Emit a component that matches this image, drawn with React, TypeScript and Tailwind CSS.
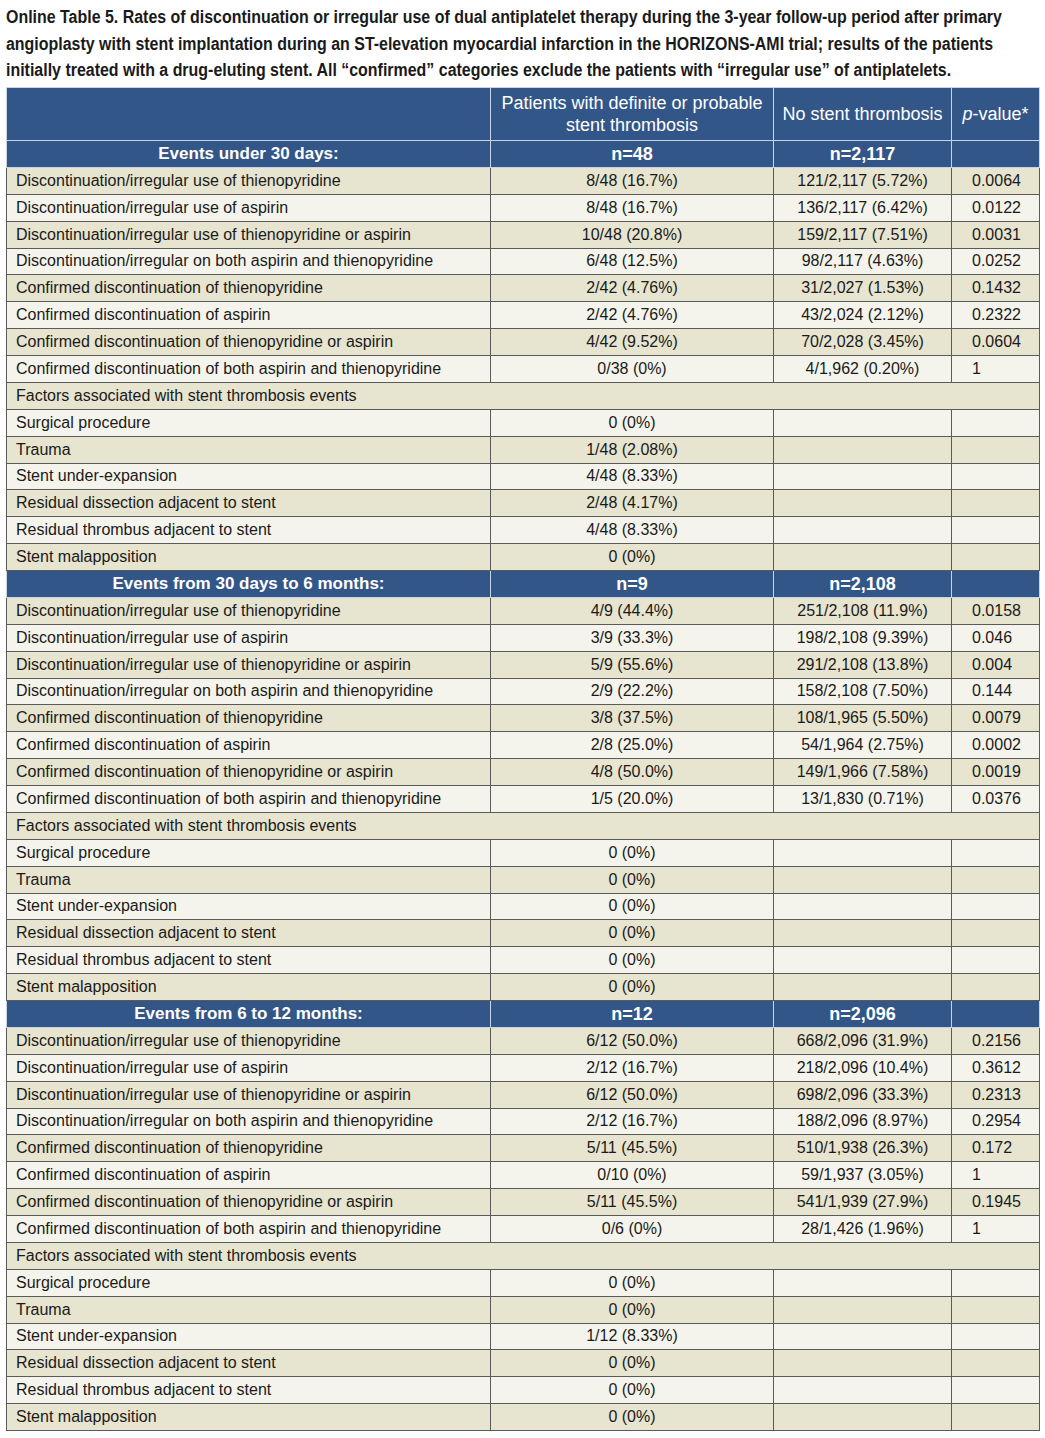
import React, { useLayoutEffect, useRef, useState } from 'react';

type Row = [string, string, string, string];

interface Group {
  title: string;
  nDefinite: string;
  nNone: string;
  rows: Row[];
  factors: [string, string][];
}

const groups: Group[] = [
  {
    title: 'Events under 30 days:',
    nDefinite: 'n=48',
    nNone: 'n=2,117',
    rows: [
      ['Discontinuation/irregular use of thienopyridine', '8/48 (16.7%)', '121/2,117 (5.72%)', '0.0064'],
      ['Discontinuation/irregular use of aspirin', '8/48 (16.7%)', '136/2,117 (6.42%)', '0.0122'],
      ['Discontinuation/irregular use of thienopyridine or aspirin', '10/48 (20.8%)', '159/2,117 (7.51%)', '0.0031'],
      ['Discontinuation/irregular on both aspirin and thienopyridine', '6/48 (12.5%)', '98/2,117 (4.63%)', '0.0252'],
      ['Confirmed discontinuation of thienopyridine', '2/42 (4.76%)', '31/2,027 (1.53%)', '0.1432'],
      ['Confirmed discontinuation of aspirin', '2/42 (4.76%)', '43/2,024 (2.12%)', '0.2322'],
      ['Confirmed discontinuation of thienopyridine or aspirin', '4/42 (9.52%)', '70/2,028 (3.45%)', '0.0604'],
      ['Confirmed discontinuation of both aspirin and thienopyridine', '0/38 (0%)', '4/1,962 (0.20%)', '1'],
    ],
    factors: [
      ['Surgical procedure', '0 (0%)'],
      ['Trauma', '1/48 (2.08%)'],
      ['Stent under-expansion', '4/48 (8.33%)'],
      ['Residual dissection adjacent to stent', '2/48 (4.17%)'],
      ['Residual thrombus adjacent to stent', '4/48 (8.33%)'],
      ['Stent malapposition', '0 (0%)'],
    ],
  },
  {
    title: 'Events from 30 days to 6 months:',
    nDefinite: 'n=9',
    nNone: 'n=2,108',
    rows: [
      ['Discontinuation/irregular use of thienopyridine', '4/9 (44.4%)', '251/2,108 (11.9%)', '0.0158'],
      ['Discontinuation/irregular use of aspirin', '3/9 (33.3%)', '198/2,108 (9.39%)', '0.046'],
      ['Discontinuation/irregular use of thienopyridine or aspirin', '5/9 (55.6%)', '291/2,108 (13.8%)', '0.004'],
      ['Discontinuation/irregular on both aspirin and thienopyridine', '2/9 (22.2%)', '158/2,108 (7.50%)', '0.144'],
      ['Confirmed discontinuation of thienopyridine', '3/8 (37.5%)', '108/1,965 (5.50%)', '0.0079'],
      ['Confirmed discontinuation of aspirin', '2/8 (25.0%)', '54/1,964 (2.75%)', '0.0002'],
      ['Confirmed discontinuation of thienopyridine or aspirin', '4/8 (50.0%)', '149/1,966 (7.58%)', '0.0019'],
      ['Confirmed discontinuation of both aspirin and thienopyridine', '1/5 (20.0%)', '13/1,830 (0.71%)', '0.0376'],
    ],
    factors: [
      ['Surgical procedure', '0 (0%)'],
      ['Trauma', '0 (0%)'],
      ['Stent under-expansion', '0 (0%)'],
      ['Residual dissection adjacent to stent', '0 (0%)'],
      ['Residual thrombus adjacent to stent', '0 (0%)'],
      ['Stent malapposition', '0 (0%)'],
    ],
  },
  {
    title: 'Events from 6 to 12 months:',
    nDefinite: 'n=12',
    nNone: 'n=2,096',
    rows: [
      ['Discontinuation/irregular use of thienopyridine', '6/12 (50.0%)', '668/2,096 (31.9%)', '0.2156'],
      ['Discontinuation/irregular use of aspirin', '2/12 (16.7%)', '218/2,096 (10.4%)', '0.3612'],
      ['Discontinuation/irregular use of thienopyridine or aspirin', '6/12 (50.0%)', '698/2,096 (33.3%)', '0.2313'],
      ['Discontinuation/irregular on both aspirin and thienopyridine', '2/12 (16.7%)', '188/2,096 (8.97%)', '0.2954'],
      ['Confirmed discontinuation of thienopyridine', '5/11 (45.5%)', '510/1,938 (26.3%)', '0.172'],
      ['Confirmed discontinuation of aspirin', '0/10 (0%)', '59/1,937 (3.05%)', '1'],
      ['Confirmed discontinuation of thienopyridine or aspirin', '5/11 (45.5%)', '541/1,939 (27.9%)', '0.1945'],
      ['Confirmed discontinuation of both aspirin and thienopyridine', '0/6 (0%)', '28/1,426 (1.96%)', '1'],
    ],
    factors: [
      ['Surgical procedure', '0 (0%)'],
      ['Trauma', '0 (0%)'],
      ['Stent under-expansion', '1/12 (8.33%)'],
      ['Residual dissection adjacent to stent', '0 (0%)'],
      ['Residual thrombus adjacent to stent', '0 (0%)'],
      ['Stent malapposition', '0 (0%)'],
    ],
  },
];

const titleLines = [
  'Online Table 5. Rates of discontinuation or irregular use of dual antiplatelet therapy during the 3-year follow-up period after primary',
  'angioplasty with stent implantation during an ST-elevation myocardial infarction in the HORIZONS-AMI trial; results of the patients',
  'initially treated with a drug-eluting stent. All “confirmed” categories exclude the patients with “irregular use” of antiplatelets.',
];

const cell = 'border border-[#5a5a5a] h-[26.875px] p-0 leading-none';
const blueCell = 'border border-[#c9d5e6] h-[26.875px] p-0 leading-none text-white text-center';

function rowBg(i: number) {
  return i % 2 === 0 ? 'bg-[#e7e4cf]' : 'bg-[#f5f4ec]';
}

// the caption is a condensed face; squeeze Liberation Sans Bold so line 1 fills 996px
function Caption() {
  const firstRef = useRef<HTMLSpanElement>(null);
  const [scale, setScale] = useState(0.8);
  useLayoutEffect(() => {
    const w = firstRef.current?.scrollWidth ?? 0;
    if (w > 0) setScale(996 / w);
  }, []);
  return (
    <div className="pl-[6px] pt-[4px] h-[87px] overflow-hidden text-[18px] leading-[26.5px] font-bold text-[#1a1a1a]">
      {titleLines.map((line, i) => (
        <div key={i} className="whitespace-nowrap w-[1030px] overflow-hidden">
          <span
            ref={i === 0 ? firstRef : undefined}
            className="inline-block origin-left"
            style={{ transform: `scaleX(${scale})` }}
          >
            {line}
          </span>
        </div>
      ))}
    </div>
  );
}

function GroupRows({ group }: { group: Group }) {
  return (
    <>
      <tr className="bg-[#335689]">
        <td className={`${blueCell} text-[17px] font-bold`}>{group.title}</td>
        <td className={`${blueCell} text-[18px] font-bold`}>{group.nDefinite}</td>
        <td className={`${blueCell} text-[18px] font-bold`}>{group.nNone}</td>
        <td className={blueCell} />
      </tr>
      {group.rows.map((r, i) => (
        <tr key={r[0]} className={rowBg(i)}>
          <td className={`${cell} pl-[9px]`}>{r[0]}</td>
          <td className={`${cell} text-center`}>{r[1]}</td>
          <td className={`${cell} text-center`}>{r[2]}</td>
          <td className={`${cell} pl-[20px]`}>{r[3]}</td>
        </tr>
      ))}
      <tr className={rowBg(8)}>
        <td colSpan={4} className={`${cell} pl-[9px]`}>
          Factors associated with stent thrombosis events
        </td>
      </tr>
      {group.factors.map((f, i) => (
        <tr key={f[0]} className={rowBg(i + 9)}>
          <td className={`${cell} pl-[9px]`}>{f[0]}</td>
          <td className={`${cell} text-center`}>{f[1]}</td>
          <td className={cell} />
          <td className={cell} />
        </tr>
      ))}
    </>
  );
}

export default function App() {
  return (
    <div className="w-[1045px] h-[1438px] overflow-hidden bg-white font-['Liberation_Sans',Arial,sans-serif] text-[#1a1a1a]">
      <Caption />
      <table className="ml-[6px] w-[1033px] border-collapse table-fixed text-[16px] border border-[#333]">
        <colgroup>
          <col className="w-[484px]" />
          <col className="w-[283px]" />
          <col className="w-[178px]" />
          <col className="w-[88px]" />
        </colgroup>
        <thead>
          <tr className="bg-[#335689]">
            <th className={`${blueCell} h-[53px] text-[18px] font-normal`} />
            <th className={`${blueCell} h-[53px] text-[18px] font-normal`}>
              <div className="leading-[22px]">
                Patients with definite or probable
                <br />
                stent thrombosis
              </div>
            </th>
            <th className={`${blueCell} h-[53px] text-[18px] font-normal`}>No stent thrombosis</th>
            <th className={`${blueCell} h-[53px] text-[18px] font-normal`}>
              <span className="italic">p</span>-value*
            </th>
          </tr>
        </thead>
        <tbody>
          {groups.map((g) => (
            <GroupRows key={g.title} group={g} />
          ))}
        </tbody>
      </table>
    </div>
  );
}
